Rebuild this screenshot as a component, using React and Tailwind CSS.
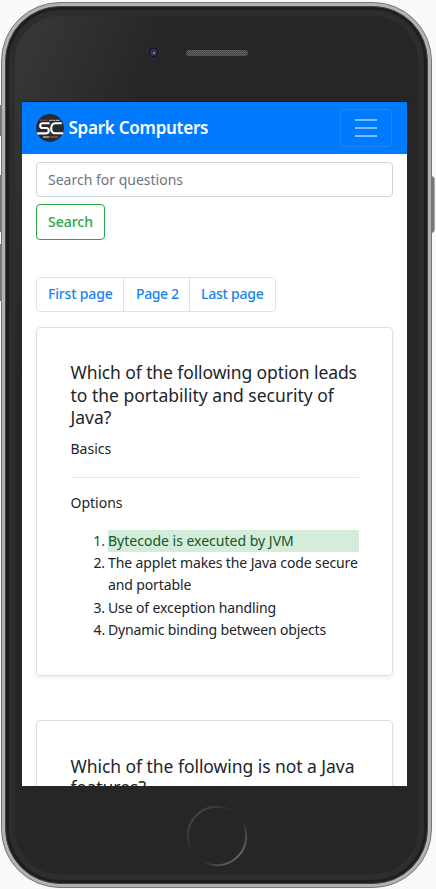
import React from "react";

function Line({ children, className = "" }) {
  return <span className={"block whitespace-nowrap " + className}>{children}</span>;
}

function Logo() {
  return (
    <svg width="28" height="28" viewBox="0 0 28 28" className="shrink-0">
      <circle cx="14" cy="14" r="13.9" fill="#292a30" />
      <path d="M4 6.3h8" stroke="#8c513a" strokeWidth="1.3" strokeDasharray="2 .7" />
      <path d="M13 6.3h11" stroke="#a9a9ab" strokeWidth="1.2" strokeDasharray="3 .5" />
      <path d="M13.6 9.3H6.6q-2.4 0-2.4 2.4 0 2.3 2.4 2.3h3.8q2.4 0 2.4 2.6 0 2.8-2.6 2.8H1.2" fill="none" stroke="#fff" strokeWidth="2.1" />
      <path d="M25.8 9.3h-6.4q-4 0-4.2 5 0 5 3.8 5h8.2" fill="none" stroke="#fff" strokeWidth="2.1" />
      <path d="M7 23h6" stroke="#c7c7c7" strokeWidth="1.3" />
      <path d="M13.5 23H22" stroke="#a06238" strokeWidth="1.3" />
    </svg>
  );
}

function PhoneTop() {
  return (
    <div className="mx-[7px] flex h-[86px] items-start border-b border-[#1b1b1b] pt-[30px]">
      <div className="ml-[125px] flex size-[13px] items-center justify-center rounded-full border border-[#33303a] bg-[#1d1a24]">
        <div className="flex size-[7px] items-center justify-center rounded-full bg-[#3b2b55]">
          <div className="size-[2px] rounded-full bg-[#a690c4]" />
        </div>
      </div>
      <svg width="62" height="6" className="mt-[4px] ml-[26px]">
        <defs>
          <pattern id="mesh" width="2" height="2" patternUnits="userSpaceOnUse">
            <rect width="2" height="2" fill="#404040" />
            <rect width="1" height="1" fill="#6c6c6c" />
            <rect x="1" y="1" width="1" height="1" fill="#606060" />
          </pattern>
        </defs>
        <rect width="62" height="6" rx="3" fill="url(#mesh)" />
      </svg>
    </div>
  );
}

function Navbar() {
  return (
    <nav className="flex h-[52px] items-center justify-between bg-[#007bff] pr-[15px] pl-[14px]">
      <div className="flex items-center gap-[4.5px]">
        <Logo />
        <Line className="text-[17px] font-semibold tracking-[-0.25px] text-white">Spark Computers</Line>
      </div>
      <button className="flex h-[38px] w-[52px] flex-col items-center justify-center gap-[5.6px] rounded border border-[#1a88ff]">
        <i className="h-[2px] w-[22px] bg-[#7fbdff]" />
        <i className="h-[2px] w-[22px] bg-[#7fbdff]" />
        <i className="h-[2px] w-[22px] bg-[#7fbdff]" />
      </button>
    </nav>
  );
}

function Card({ children, className = "" }) {
  return (
    <section className={"rounded border border-[#dfdfdf] px-[33.5px] shadow-[0_2px_4px_rgba(0,0,0,0.075)] " + className}>
      {children}
    </section>
  );
}

function Screen() {
  return (
    <div className="h-[684px] w-[385px] overflow-hidden bg-white text-[14px] text-[#212529]">
      <Navbar />
      <main className="px-[14px]">
        <div className="mt-2 flex h-[35px] w-[357px] items-center rounded border border-[#ced4da] px-[11px] pb-px text-[#6c757d]">
          <Line>Search for questions</Line>
        </div>
        <button className="mt-[7px] flex h-[36px] w-[69px] items-center justify-center rounded border border-[#28a745] pb-[2px] font-medium text-[#28a745]">
          <Line>Search</Line>
        </button>
        <div className="mt-[37px] flex h-[35px] w-[240px] rounded border border-[#dee2e6] font-medium text-[#1684ef]">
          <div className="flex w-[87px] items-center border-r border-[#dee2e6] pb-[3px] pl-[11px]"><Line className="tracking-[-0.18px]">First page</Line></div>
          <div className="flex w-[66px] items-center border-r border-[#dee2e6] pb-[3px] pl-[12px]"><Line className="tracking-[-0.4px]">Page 2</Line></div>
          <div className="flex items-center pb-[3px] pl-[11px]"><Line className="tracking-[-0.25px]">Last page</Line></div>
        </div>
        <Card className="mt-[15px] h-[349px] pt-[33px]">
          <h5 className="text-[17.5px] leading-[22.6px]">
            <Line className="tracking-[-0.1px]">Which of the following option leads</Line>
            <Line>to the portability and security of</Line>
            <Line>Java?</Line>
          </h5>
          <p className="mt-[9px] leading-[22.4px]">Basics</p>
          <hr className="mt-[17px] border-[#e5e5e5]" />
          <p className="mt-[14px] leading-[22.4px]">Options</p>
          <ol className="mt-[15px] leading-[22.4px]">
            <li className="flex"><span className="w-[37.5px] shrink-0 pr-[3px] text-right text-[#155724]">1.</span><div className="w-[251px] bg-[#d4edda] text-[#155724]"><Line>Bytecode is executed by JVM</Line></div></li>
            <li className="flex tracking-[-0.12px]"><span className="w-[37.5px] shrink-0 pr-[3px] text-right">2.</span><div><Line>The applet makes the Java code secure</Line><Line>and portable</Line></div></li>
            <li className="flex tracking-[-0.12px]"><span className="w-[37.5px] shrink-0 pr-[3px] text-right">3.</span><Line>Use of exception handling</Line></li>
            <li className="flex tracking-[-0.15px]"><span className="w-[37.5px] shrink-0 pr-[3px] text-right">4.</span><Line>Dynamic binding between objects</Line></li>
          </ol>
        </Card>
        <Card className="mt-[44px] h-[300px] pt-[35px]">
          <h5 className="text-[17.5px] leading-[20.5px]">
            <Line className="tracking-[-0.05px]">Which of the following is not a Java</Line>
            <Line>features?</Line>
          </h5>
        </Card>
      </main>
    </div>
  );
}

export default function App() {
  return (
    <div className="relative h-[889px] w-[436px] overflow-hidden bg-[#fafafa] pt-[2px] pl-[1px] font-['Noto_Sans',sans-serif]">
      <div className="absolute top-[105px] left-0 h-[31px] w-[2px] bg-[#777]" />
      <div className="absolute top-[175px] left-0 h-[57px] w-[2px] bg-[#777]" />
      <div className="absolute top-[244px] left-0 h-[57px] w-[2px] bg-[#777]" />
      <div className="absolute top-[176px] left-[431px] h-[57px] w-[4px] rounded-r-sm border-r border-[#aaa] bg-[#77777b]" />
      <div className="relative h-[886px] w-[431px] rounded-[59px] border border-[#777] bg-[#b2b2b2] p-[3px]">
        <div className="h-full w-full rounded-[55px] border border-[#444] bg-[#1e1e1e] p-[3px]">
          <div className="h-full w-full rounded-[51px] border-[6px] border-[#2d2d2d] bg-[#262626] bg-[linear-gradient(113deg,#393939_0px,#262626_145px)]">
            <PhoneTop />
            <div className="ml-[7px]"><Screen /></div>
            <svg width="64" height="64" className="mt-[18px] ml-[169.5px]">
              <defs>
                <linearGradient id="ring" x1="0" y1="0" x2="1" y2="1">
                  <stop offset="0" stopColor="#555" /><stop offset=".42" stopColor="#262626" />
                  <stop offset=".6" stopColor="#262626" /><stop offset="1" stopColor="#888" />
                </linearGradient>
              </defs>
              <circle cx="32" cy="32" r="29.2" fill="none" stroke="url(#ring)" strokeWidth="2" />
            </svg>
          </div>
        </div>
      </div>
    </div>
  );
}
